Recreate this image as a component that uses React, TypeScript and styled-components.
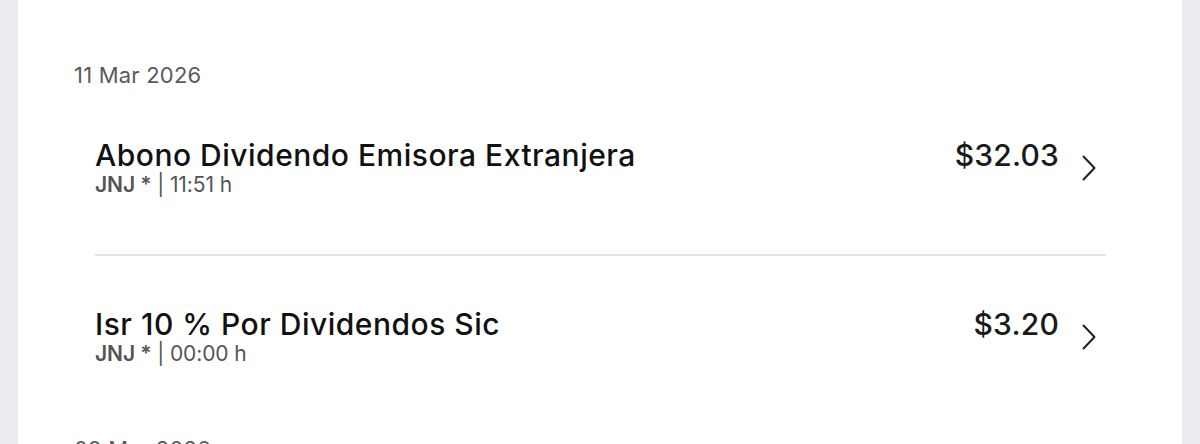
import React from 'react';
import { createGlobalStyle, styled } from 'styled-components';

interface Movement {
  title: string;
  ticker: string;
  time: string;
  amount: string;
}

interface DayGroup {
  date: string;
  items: Movement[];
}

const groups: DayGroup[] = [
  {
    date: '11 Mar 2026',
    items: [
      { title: 'Abono Dividendo Emisora Extranjera', ticker: 'JNJ *', time: '11:51 h', amount: '$32.03' },
      { title: 'Isr 10 % Por Dividendos Sic', ticker: 'JNJ *', time: '00:00 h', amount: '$3.20' },
    ],
  },
  {
    date: '09 Mar 2026',
    items: [],
  },
];

const GlobalStyle = createGlobalStyle`
  html, body {
    margin: 0;
    padding: 0;
    background: #ecedf1;
    overflow: hidden;
  }
  body {
    font-family: Inter, "Noto Sans", sans-serif;
    -webkit-font-smoothing: antialiased;
  }
`;

const Chevron = () => (
  <svg width="16" height="26" viewBox="0 0 16 26" fill="none">
    <path d="M2.5 1.5 L13.5 13 L2.5 24.5" stroke="#1c1c1c" strokeWidth="1.9" strokeLinecap="round" strokeLinejoin="round" />
  </svg>
);

const App: React.FC = () => {
  return (
    <>
      <GlobalStyle />
      <Card>
        {groups.map((group) => (
          <Section key={group.date}>
            <DateLabel>{group.date}</DateLabel>
            <List>
              {group.items.map((item, i) => (
                <Row key={item.title} $last={i === group.items.length - 1}>
                  <Info>
                    <Title>{item.title}</Title>
                    <Meta>
                      <Ticker>{item.ticker}</Ticker> | {item.time}
                    </Meta>
                  </Info>
                  <Amount>{item.amount}</Amount>
                  <ChevronBox>
                    <Chevron />
                  </ChevronBox>
                </Row>
              ))}
            </List>
          </Section>
        ))}
      </Card>
    </>
  );
};

export default App;

const Card = styled.div`
  margin: 0 18px;
  height: 444px;
  overflow: hidden;
  background: #ffffff;
  padding: 61px 76px 0 56px;
  box-sizing: border-box;
`;

const Section = styled.section`
  display: flex;
  flex-direction: column;
  margin-bottom: 14px;
`;

const DateLabel = styled.div`
  font-size: 22px;
  line-height: 28px;
  color: #5b5b5b;
  letter-spacing: 0.2px;
`;

const List = styled.div`
  display: flex;
  flex-direction: column;
  padding-left: 21px;
`;

const Row = styled.div<{ $last: boolean }>`
  display: flex;
  align-items: flex-start;
  padding: ${({ $last }) => ($last ? '51px 0 56px' : '49px 0 58px')};
  border-bottom: ${({ $last }) => ($last ? 'none' : '2px solid #e6e6e8')};
`;

const Info = styled.div`
  flex: 1;
  display: flex;
  flex-direction: column;
`;

const Title = styled.div`
  font-size: 30px;
  line-height: 34px;
  font-weight: 500;
  color: #111111;
  letter-spacing: 0.5px;
`;

const Meta = styled.div`
  margin-top: 1px;
  font-size: 21px;
  line-height: 23px;
  color: #555555;
  letter-spacing: -0.1px;
`;

const Ticker = styled.span`
  font-weight: 600;
`;

const Amount = styled.div`
  font-size: 30px;
  line-height: 34px;
  font-weight: 500;
  color: #1a1a1a;
  letter-spacing: 0.2px;
`;

const ChevronBox = styled.div`
  display: flex;
  margin: 17px 9px 0 22px;
`;
